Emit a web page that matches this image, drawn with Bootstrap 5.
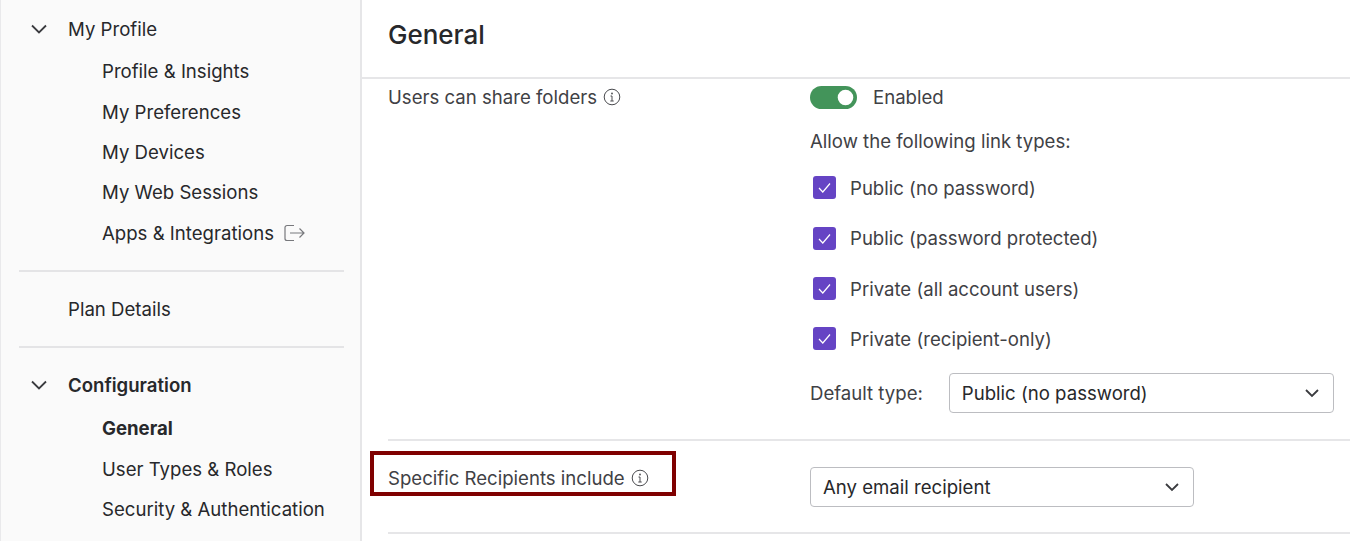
<!DOCTYPE html>
<html lang="en">
<head>
    <meta charset="UTF-8">
    <meta name="viewport" content="width=device-width, initial-scale=1.0">
    <title>General Settings</title>
    <link href="https://cdn.jsdelivr.net/npm/bootstrap@5.3.0/dist/css/bootstrap.min.css" rel="stylesheet">
    <style>
        html, body {
            height: 541px;
            overflow: hidden;
        }

        body {
            font-family: Inter, "Liberation Sans", sans-serif;
            font-size: 18.6px;
            line-height: 24px;
            color: #3f4145;
            background-color: #fff;
        }

        .side-panel {
            width: 362px;
            height: 541px;
            flex-shrink: 0;
            padding: 9px 16px 0 18px;
            background-color: #fafafa;
            border-left: 1px solid #e9e9eb;
            border-right: 2px solid #e6e6e8;
            color: #27282b;
        }

        .side-head {
            height: 40px;
            display: flex;
            align-items: center;
            padding-left: 49px;
            position: relative;
        }

        .side-head svg {
            position: absolute;
            left: 11px;
            top: 15px;
        }

        .side-sub {
            margin-top: 2px;
        }

        .side-sub-last {
            margin-top: 3px;
        }

        .side-link {
            height: 40.4px;
            display: flex;
            align-items: center;
            gap: 10px;
            padding-left: 83px;
        }

        .side-rule {
            margin: 17px 0;
            border-top: 2px solid #e4e4e6;
            opacity: 1;
        }

        .main-panel {
            min-width: 0;
        }

        .page-title {
            height: 79px;
            margin: 0;
            padding: 19px 0 0 26px;
            font-size: 26px;
            line-height: 32px;
            font-weight: 500;
            color: #27282b;
            border-bottom: 2px solid #e6e6e8;
        }

        .setting-list {
            padding-left: 26px;
        }

        .setting-row {
            display: flex;
            border-bottom: 2px solid #e6e6e8;
        }

        .setting-label {
            width: 422px;
            flex-shrink: 0;
        }

        .share-row {
            height: 362px;
            padding-top: 6px;
        }

        .recipient-row {
            height: 93px;
            padding-top: 26px;
        }

        .recipient-mark {
            width: 306px;
            height: 45px;
            margin: -16px 0 0 -18px;
            padding: 11px 0 0 14px;
            border: 4px solid #7f0000;
        }

        .info-icon {
            margin-left: 1px;
            vertical-align: -2px;
        }

        .form-switch .switch-input {
            width: 47px;
            height: 23px;
            margin: 0;
            float: none;
            border: 0;
            background-color: #43945a;
            background-image: url("data:image/svg+xml,%3csvg xmlns='http://www.w3.org/2000/svg' viewBox='-4 -4 8 8'%3e%3ccircle r='2.7' fill='%23fff'/%3e%3c/svg%3e");
        }

        .switch-wrap {
            padding-left: 0;
            margin: 0;
            min-height: 0;
            height: 23px;
            display: flex;
        }

        .status-text {
            margin-left: 16px;
        }

        .link-heading {
            margin-top: 20px;
        }

        .type-list {
            margin-top: 9.6px;
        }

        .type-item {
            height: 50.4px;
            display: flex;
            align-items: center;
            gap: 14px;
            padding-left: 3px;
        }

        .type-item .form-check-input {
            width: 23px;
            height: 23px;
            margin: 0;
            border: 0;
            border-radius: 3px;
            background-color: #6544c4;
            background-size: 100% 100%;
            background-image: url("data:image/svg+xml,%3csvg xmlns='http://www.w3.org/2000/svg' viewBox='0 0 23 23'%3e%3cpath d='M6 12l3.800 4L17 7.500' fill='none' stroke='%23fff' stroke-width='1.2'/%3e%3c/svg%3e");
        }

        .default-row {
            margin-top: 8.4px;
        }

        .default-text {
            margin-right: 26px;
        }

        .pick-box {
            height: 40px;
            padding: 0 40px 0 12px;
            font-size: 18.6px;
            line-height: 38px;
            color: #27282b;
            border: 1px solid #bcbdc1;
            border-radius: 4px;
            background-position: right 12px center;
            background-size: 18px 18px;
            background-image: url("data:image/svg+xml,%3csvg xmlns='http://www.w3.org/2000/svg' viewBox='0 0 18 18'%3e%3cpath d='M3 6l6 6 6-6' fill='none' stroke='%233a3b3f' stroke-width='1.800'/%3e%3c/svg%3e");
        }

        .pick-wide {
            width: 385px;
        }

        .pick-narrow {
            width: 384px;
        }
    </style>
</head>
<body>
    <div class="d-flex">
        <nav class="side-panel">
            <div class="side-head">
                <svg width="18" height="11" viewBox="0 0 18 11"><path d="M2 1.500l7 7 7-7" fill="none" stroke="#3a3b3f" stroke-width="1.800"/></svg>
                My Profile
            </div>
            <div class="side-sub">
                <div class="side-link">Profile &amp; Insights</div>
                <div class="side-link">My Preferences</div>
                <div class="side-link">My Devices</div>
                <div class="side-link">My Web Sessions</div>
                <div class="side-link">Apps &amp; Integrations
                    <svg width="21" height="18" viewBox="0 0 21 18"><path d="M10 1.500H3a2 2 0 0 0-2 2v11a2 2 0 0 0 2 2h7M6 9h14M15.500 4.500L20 9l-4.500 4.500" fill="none" stroke="#77787c" stroke-width="1.200"/></svg>
                </div>
            </div>
            <hr class="side-rule">
            <div class="side-head">Plan Details</div>
            <hr class="side-rule">
            <div class="side-head fw-semibold">
                <svg width="18" height="11" viewBox="0 0 18 11"><path d="M2 1.500l7 7 7-7" fill="none" stroke="#3a3b3f" stroke-width="1.800"/></svg>
                Configuration
            </div>
            <div class="side-sub-last">
                <div class="side-link fw-bold">General</div>
                <div class="side-link">User Types &amp; Roles</div>
                <div class="side-link">Security &amp; Authentication</div>
            </div>
        </nav>
        <main class="main-panel flex-grow-1">
            <h1 class="page-title">General</h1>
            <div class="setting-list">
                <div class="setting-row share-row">
                    <div class="setting-label">Users can share folders
                        <svg class="info-icon" width="18" height="18" viewBox="0 0 18 18"><circle cx="9" cy="9" r="7.800" fill="none" stroke="#4a4b4f" stroke-width="1"/><path d="M9 8v5M7.500 8H9M7.300 13h3.400" fill="none" stroke="#4a4b4f"/><circle cx="9" cy="5.500" r="0.900" fill="#4a4b4f"/></svg>
                    </div>
                    <div class="flex-grow-1">
                        <div class="d-flex align-items-center">
                            <div class="form-check form-switch switch-wrap">
                                <input class="form-check-input switch-input" type="checkbox" checked aria-label="Users can share folders">
                            </div>
                            <span class="status-text">Enabled</span>
                        </div>
                        <div class="link-heading">Allow the following link types:</div>
                        <div class="type-list">
                            <label class="type-item"><input class="form-check-input" type="checkbox" checked>Public (no password)</label>
                            <label class="type-item"><input class="form-check-input" type="checkbox" checked>Public (password protected)</label>
                            <label class="type-item"><input class="form-check-input" type="checkbox" checked>Private (all account users)</label>
                            <label class="type-item"><input class="form-check-input" type="checkbox" checked>Private (recipient-only)</label>
                        </div>
                        <div class="d-flex align-items-center default-row">
                            <span class="default-text">Default type:</span>
                            <select class="form-select pick-box pick-wide" aria-label="Default type"><option>Public (no password)</option></select>
                        </div>
                    </div>
                </div>
                <div class="setting-row recipient-row">
                    <div class="setting-label">
                        <div class="recipient-mark">Specific Recipients include
                            <svg class="info-icon" width="18" height="18" viewBox="0 0 18 18"><circle cx="9" cy="9" r="7.800" fill="none" stroke="#4a4b4f" stroke-width="1"/><path d="M9 8v5M7.500 8H9M7.300 13h3.400" fill="none" stroke="#4a4b4f"/><circle cx="9" cy="5.500" r="0.900" fill="#4a4b4f"/></svg>
                        </div>
                    </div>
                    <select class="form-select pick-box pick-narrow" aria-label="Specific Recipients include"><option>Any email recipient</option></select>
                </div>
            </div>
        </main>
    </div>
</body>
</html>
